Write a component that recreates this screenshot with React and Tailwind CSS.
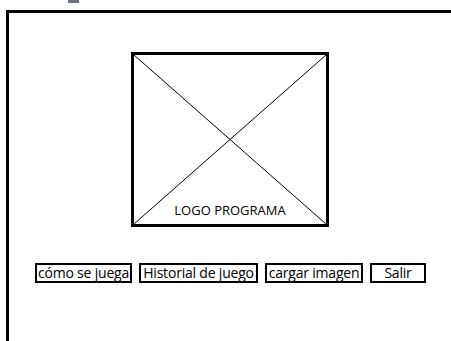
export default function App() {
  const buttons = [
    { label: "cómo se juega", width: "w-[97px]" },
    { label: "Historial de juego", width: "w-[119px]" },
    { label: "cargar imagen", width: "w-[98px]" },
    { label: "Salir", width: "w-[56px]" },
  ];

  return (
    <div className="relative h-[341px] w-[451px] overflow-hidden bg-white pl-[6px] pt-[10px] font-['Open_Sans',sans-serif] text-black">
      {/* cut-off mark above the frame */}
      <div className="absolute left-[68px] top-0 h-[3px] w-[11px] bg-gray-500" />

      <div className="h-[400px] w-[500px] border-l-[3px] border-t-[3px] border-black">
        <div className="ml-[122px] mt-[39px] w-[198px]">
          <LogoBox />
        </div>

        <div className="ml-[26px] mt-[36px] flex gap-[7px]">
          {buttons.map((b) => (
            <div
              key={b.label}
              className={`flex h-[20px] shrink-0 items-center justify-center whitespace-nowrap border-2 border-black pb-[1px] text-[14px] leading-none tracking-[-0.2px] ${b.width}`}
            >
              {b.label}
            </div>
          ))}
        </div>
      </div>
    </div>
  );
}

function LogoBox() {
  return (
    <div className="relative flex h-[175px] w-[198px] items-end justify-center border-[3px] border-black pb-[7px]">
      <svg className="absolute inset-0 h-full w-full" viewBox="0 0 192 169" preserveAspectRatio="none">
        <line x1="0" y1="0" x2="192" y2="169" stroke="black" strokeWidth="1" />
        <line x1="192" y1="0" x2="0" y2="169" stroke="black" strokeWidth="1" />
      </svg>
      <span className="relative text-[13px] leading-none">LOGO PROGRAMA</span>
    </div>
  );
}
